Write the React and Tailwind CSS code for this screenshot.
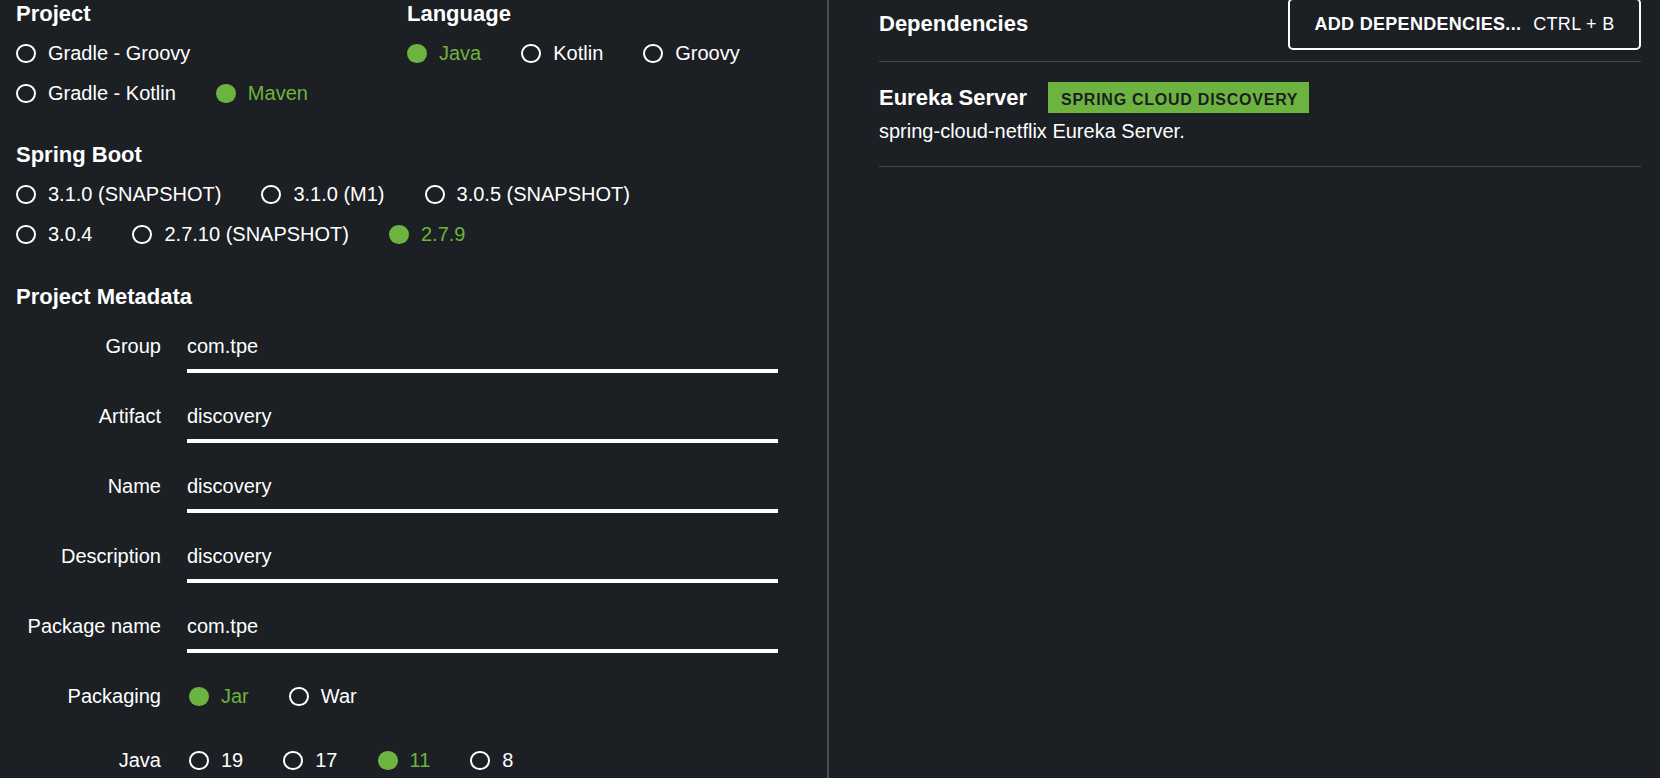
import clsx from 'clsx'

const PROJECT_ROWS = [
  [{ label: 'Gradle - Groovy' }],
  [{ label: 'Gradle - Kotlin' }, { label: 'Maven', checked: true }]
]

const LANGUAGES = [
  { label: 'Java', checked: true },
  { label: 'Kotlin' },
  { label: 'Groovy' }
]

const BOOT_ROWS = [
  [{ label: '3.1.0 (SNAPSHOT)' }, { label: '3.1.0 (M1)' }, { label: '3.0.5 (SNAPSHOT)' }],
  [{ label: '3.0.4' }, { label: '2.7.10 (SNAPSHOT)' }, { label: '2.7.9', checked: true }]
]

const METADATA = [
  { label: 'Group', value: 'com.tpe' },
  { label: 'Artifact', value: 'discovery' },
  { label: 'Name', value: 'discovery' },
  { label: 'Description', value: 'discovery' },
  { label: 'Package name', value: 'com.tpe' }
]

function Radio({ label, checked }) {
  return (
    <div className="flex items-center mr-[40px] shrink-0">
      <span
        className={clsx(
          'w-[20px] h-[19px] rounded-full shrink-0',
          checked ? 'bg-[#6db33f]' : 'border-2 border-white'
        )}
      />
      <span
        className={clsx(
          'ml-[12px] text-[20px] leading-[24px] whitespace-nowrap',
          checked ? 'text-[#6db33f]' : 'text-white'
        )}
      >
        {label}
      </span>
    </div>
  )
}

function RadioRow({ items }) {
  return (
    <div className="flex items-center h-[40px]">
      {items.map((item) => (
        <Radio key={item.label} {...item} />
      ))}
    </div>
  )
}

function Heading({ children }) {
  return <h2 className="text-[22px] font-bold leading-[28px] h-[28px] text-white">{children}</h2>
}

function Field({ label, value }) {
  return (
    <div className="flex items-start">
      <div className="w-[145px] text-right text-[20px] leading-[24px] shrink-0">{label}</div>
      <div className="ml-[26px] w-[591px] text-[20px] leading-[24px] pb-[11px] border-b-4 border-white">
        {value}
      </div>
    </div>
  )
}

function OptionField({ label, items, className }) {
  return (
    <div className={clsx('flex items-center', className)}>
      <div className="w-[145px] text-right text-[20px] leading-[24px] shrink-0">{label}</div>
      <div className="ml-[28px]">
        <RadioRow items={items} />
      </div>
    </div>
  )
}

export default function App() {
  return (
    <div className="flex h-[778px] overflow-hidden bg-[#1c1f24] text-white font-['Liberation_Sans',Arial,sans-serif]">
      {/* left: project settings */}
      <div className="w-[827px] shrink-0 pl-[16px]">
        <div className="flex">
          <div className="w-[391px] shrink-0">
            <Heading>Project</Heading>
            <div className="mt-[5px]">
              {PROJECT_ROWS.map((row, i) => (
                <RadioRow key={i} items={row} />
              ))}
            </div>
          </div>
          <div>
            <Heading>Language</Heading>
            <div className="mt-[5px]">
              <RadioRow items={LANGUAGES} />
            </div>
          </div>
        </div>

        <div className="mt-[28px]">
          <Heading>Spring Boot</Heading>
          <div className="mt-[5px]">
            {BOOT_ROWS.map((row, i) => (
              <RadioRow key={i} items={row} />
            ))}
          </div>
        </div>

        <div className="mt-[29px]">
          <Heading>Project Metadata</Heading>
          <div className="mt-[23px] flex flex-col gap-[31px]">
            {METADATA.map((f) => (
              <Field key={f.label} {...f} />
            ))}
          </div>
          <OptionField
            className="mt-[23px]"
            label="Packaging"
            items={[{ label: 'Jar', checked: true }, { label: 'War' }]}
          />
          <OptionField
            className="mt-[24px]"
            label="Java"
            items={[{ label: '19' }, { label: '17' }, { label: '11', checked: true }, { label: '8' }]}
          />
        </div>
      </div>

      <div className="w-[2px] shrink-0 bg-[#4a4d52]" />

      {/* right: dependencies */}
      <div className="flex-1 pl-[50px] pr-[19px]">
        <div className="-mt-[2px] h-[52px] flex items-center justify-between">
          <h2 className="text-[22px] font-bold leading-[28px]">Dependencies</h2>
          <button
            type="button"
            className="h-[52px] w-[353px] border-2 border-white rounded-[5px] flex items-center justify-center gap-[12px] text-[18px] leading-[24px] tracking-[0.3px] text-white"
          >
            <span className="font-bold">ADD DEPENDENCIES...</span>
            <span>CTRL + B</span>
          </button>
        </div>
        <div className="mt-[11px] h-px bg-[#44474c]" />

        <div className="mt-[20px] flex items-center h-[31px]">
          <span className="text-[22px] font-bold leading-[28px]">Eureka Server</span>
          <span className="ml-[21px] h-[31px] bg-[#6db33f] pl-[13px] pr-[11px] pt-[5px] text-[16px] leading-[26px] font-bold tracking-[0.75px] text-[#1b1e23] whitespace-nowrap">
            SPRING CLOUD DISCOVERY
          </span>
        </div>
        <p className="mt-[6px] text-[20px] leading-[24px]">spring-cloud-netflix Eureka Server.</p>
        <div className="mt-[23px] h-px bg-[#44474c]" />
      </div>
    </div>
  )
}
